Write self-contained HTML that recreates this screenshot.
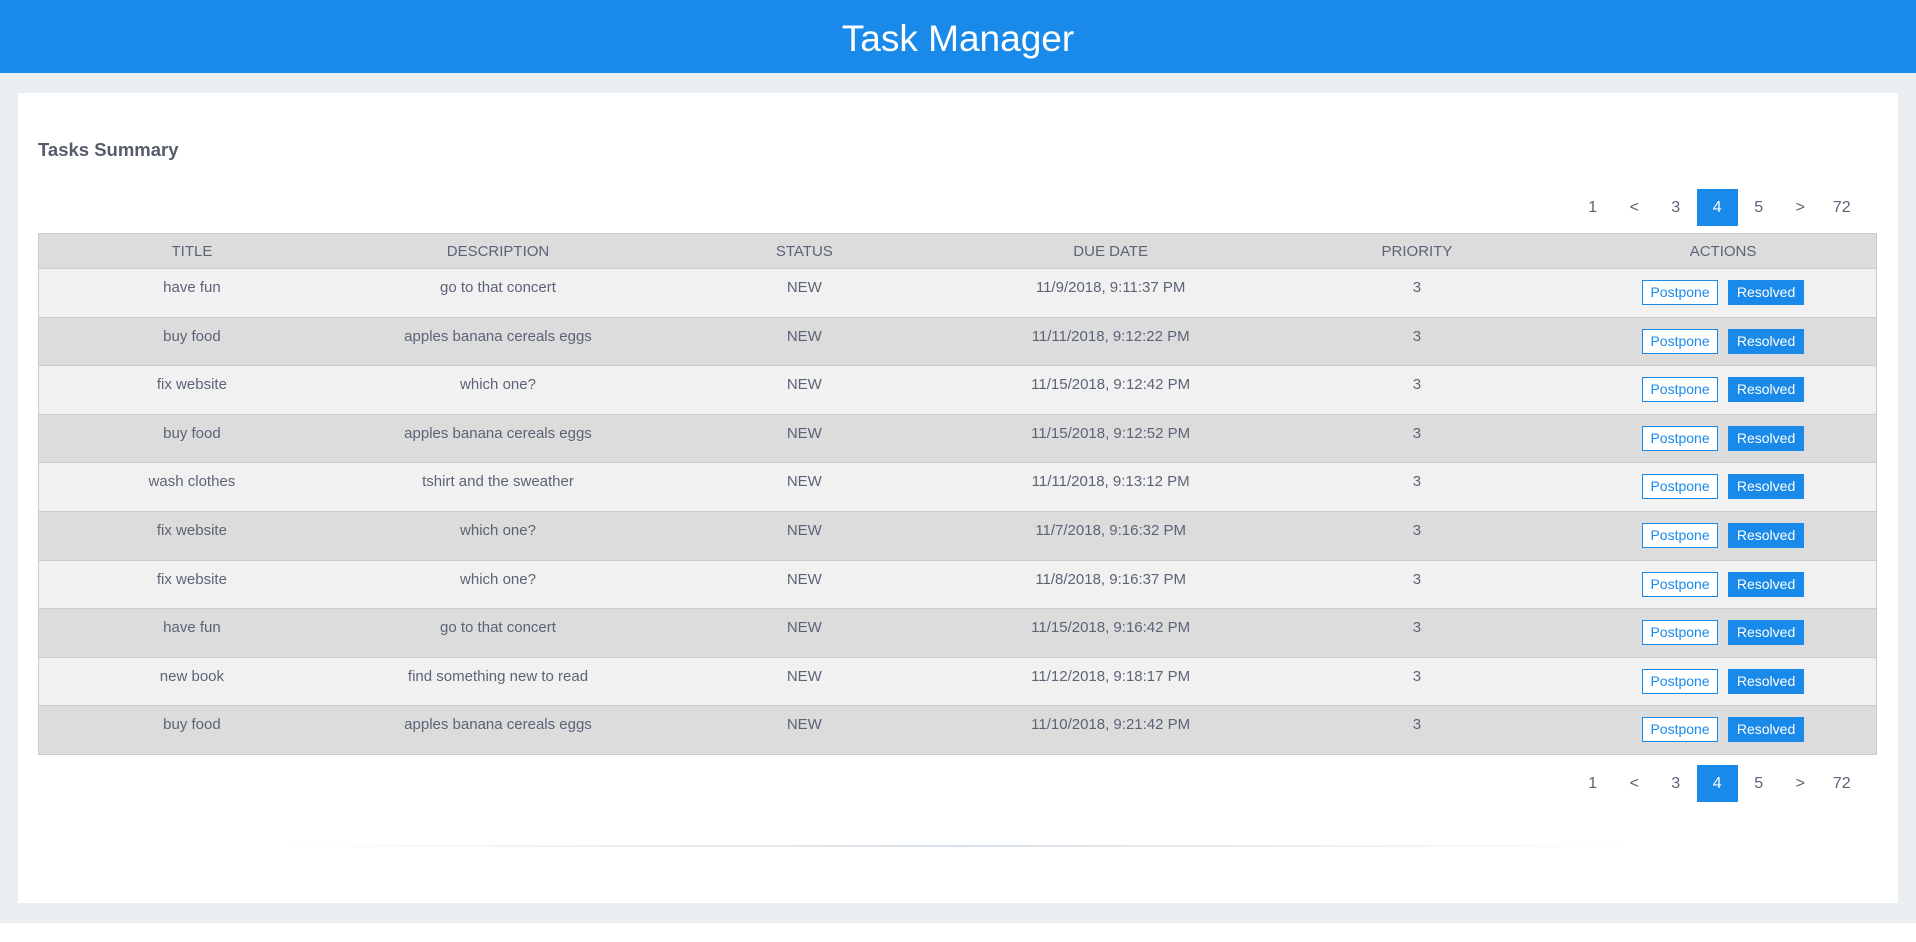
<!DOCTYPE html>
<html><head><meta charset="utf-8"><style>
*{margin:0;padding:0;box-sizing:border-box}
body{width:1916px;height:942px;background:#fff;font-family:"Liberation Sans",sans-serif;color:#5b6476;position:relative;overflow:hidden}
.hdr{position:absolute;left:0;top:0;width:1916px;height:73px;background:#1a8aea;color:#fff;text-align:center;font-size:37px;line-height:78px;font-weight:300}
.bg{position:absolute;left:0;top:73px;width:1916px;height:850px;background:#e9eef1}
.card{position:absolute;left:18px;top:93px;width:1880px;height:810px;background:#fff}
h2{position:absolute;left:38px;top:139px;font-size:18.5px;font-weight:bold;color:#555d6b}
.pg{position:absolute;left:1572px;height:37px;display:flex;font-size:16px}
.pg span{width:41.5px;text-align:center;line-height:37px;color:#5b6476}
.pg span.a{background:#1a8aea;color:#fff}
table{position:absolute;left:38px;top:233px;width:1839px;border-collapse:collapse;border:1px solid #ccc;table-layout:fixed}
th{height:35px;background:#dcdcdc;font-weight:normal;font-size:15px;color:#5b6476;border-bottom:1px solid #ccc}
td{height:48.6px;text-align:center;vertical-align:top;padding-top:10px;font-size:15px;border-bottom:1px solid #ccc}
tr.o td{background:#f1f1f1}
tr.e td{background:#dcdcdc}
td.ac{padding-top:11px}
.b{display:inline-block;width:76px;height:25px;line-height:23px;font-size:14px;border:1px solid #1a8aea;vertical-align:top}
.p{background:#fff;color:#1a8aea;margin-right:10px}
.r{background:#1a8aea;color:#fff}
.ln{position:absolute;left:281px;top:845px;width:1356px;height:2px;background:linear-gradient(90deg,rgba(220,228,234,0),#d7e0e8 50%,rgba(220,228,234,0))}
</style></head><body>
<div class="hdr">Task Manager</div>
<div class="bg"></div>
<div class="card"></div>
<h2>Tasks Summary</h2>
<div class="pg" style="top:189px"><span>1</span><span>&lt;</span><span>3</span><span class="a">4</span><span>5</span><span>&gt;</span><span>72</span></div>
<table>
<tr><th>TITLE</th><th>DESCRIPTION</th><th>STATUS</th><th>DUE DATE</th><th>PRIORITY</th><th>ACTIONS</th></tr>
<tr class="o"><td>have fun</td><td>go to that concert</td><td>NEW</td><td>11/9/2018, 9:11:37 PM</td><td>3</td><td class="ac"><span class="b p">Postpone</span><span class="b r">Resolved</span></td></tr>
<tr class="e"><td>buy food</td><td>apples banana cereals eggs</td><td>NEW</td><td>11/11/2018, 9:12:22 PM</td><td>3</td><td class="ac"><span class="b p">Postpone</span><span class="b r">Resolved</span></td></tr>
<tr class="o"><td>fix website</td><td>which one?</td><td>NEW</td><td>11/15/2018, 9:12:42 PM</td><td>3</td><td class="ac"><span class="b p">Postpone</span><span class="b r">Resolved</span></td></tr>
<tr class="e"><td>buy food</td><td>apples banana cereals eggs</td><td>NEW</td><td>11/15/2018, 9:12:52 PM</td><td>3</td><td class="ac"><span class="b p">Postpone</span><span class="b r">Resolved</span></td></tr>
<tr class="o"><td>wash clothes</td><td>tshirt and the sweather</td><td>NEW</td><td>11/11/2018, 9:13:12 PM</td><td>3</td><td class="ac"><span class="b p">Postpone</span><span class="b r">Resolved</span></td></tr>
<tr class="e"><td>fix website</td><td>which one?</td><td>NEW</td><td>11/7/2018, 9:16:32 PM</td><td>3</td><td class="ac"><span class="b p">Postpone</span><span class="b r">Resolved</span></td></tr>
<tr class="o"><td>fix website</td><td>which one?</td><td>NEW</td><td>11/8/2018, 9:16:37 PM</td><td>3</td><td class="ac"><span class="b p">Postpone</span><span class="b r">Resolved</span></td></tr>
<tr class="e"><td>have fun</td><td>go to that concert</td><td>NEW</td><td>11/15/2018, 9:16:42 PM</td><td>3</td><td class="ac"><span class="b p">Postpone</span><span class="b r">Resolved</span></td></tr>
<tr class="o"><td>new book</td><td>find something new to read</td><td>NEW</td><td>11/12/2018, 9:18:17 PM</td><td>3</td><td class="ac"><span class="b p">Postpone</span><span class="b r">Resolved</span></td></tr>
<tr class="e"><td>buy food</td><td>apples banana cereals eggs</td><td>NEW</td><td>11/10/2018, 9:21:42 PM</td><td>3</td><td class="ac"><span class="b p">Postpone</span><span class="b r">Resolved</span></td></tr>
</table>
<div class="pg" style="top:765px"><span>1</span><span>&lt;</span><span>3</span><span class="a">4</span><span>5</span><span>&gt;</span><span>72</span></div>
<div class="ln"></div>
</body></html>
